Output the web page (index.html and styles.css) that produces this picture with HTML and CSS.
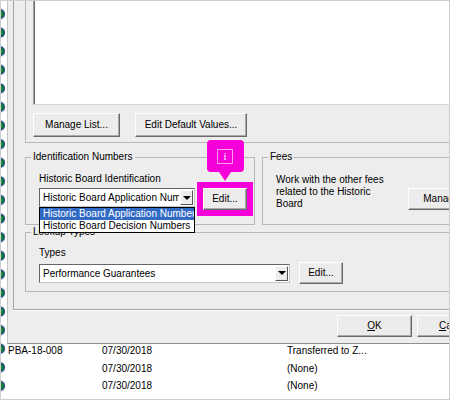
FILE: index.html
```html
<!DOCTYPE html>
<html lang="en">
<head>
<meta charset="utf-8">
<title>Historic Board Settings</title>
<link rel="stylesheet" href="styles.css">
</head>
<body>
<div class="screen">
  <div class="icons"></div>
  <div class="main">
    <div class="dialog">
      <div class="page">
        <div class="group-list">
          <div class="listbox"></div>
          <div class="btn-row">
            <button class="btn btn-manage">Manage List...</button>
            <button class="btn btn-defaults">Edit Default Values...</button>
          </div>
        </div>

        <div class="pair">
          <fieldset class="box box-ident">
            <legend>Identification Numbers</legend>
            <div class="box-body">
              <div class="label label-ident">Historic Board Identification</div>
              <div class="combo-row">
                <div class="combo combo-ident">
                  <span class="combo-text">Historic Board Application Numbers</span>
                  <span class="combo-arrow"></span>
                  <ul class="combo-list">
                    <li class="selected">Historic Board Application Numbers</li>
                    <li>Historic Board Decision Numbers</li>
                  </ul>
                </div>
                <div class="focus-wrap">
                  <button class="btn btn-edit btn-focus">Edit...</button>
                  <div class="callout"><span class="callout-icon">i</span></div>
                </div>
              </div>
            </div>
          </fieldset>

          <fieldset class="box box-fees">
            <legend>Fees</legend>
            <div class="fees-body">
              <p class="fees-text">Work with the other fees related to the Historic Board</p>
              <button class="btn btn-fees">Manage...</button>
            </div>
          </fieldset>
        </div>

        <fieldset class="box box-lookup">
          <legend>Lookup Types</legend>
          <div class="box-body">
            <div class="label label-types">Types</div>
            <div class="combo-row combo-row-lookup">
              <div class="combo combo-lookup">
                <span class="combo-text">Performance Guarantees</span>
                <span class="combo-arrow"></span>
              </div>
              <button class="btn btn-edit">Edit...</button>
            </div>
          </div>
        </fieldset>
      </div>

      <div class="footer">
        <button class="btn btn-dlg"><u>O</u>K</button>
        <button class="btn btn-dlg"><u>C</u>ancel</button>
      </div>
    </div>

    <div class="rows">
      <div class="row"><span>PBA-18-008</span><span>07/30/2018</span><span>Transferred to Z...</span></div>
      <div class="row"><span></span><span>07/30/2018</span><span>(None)</span></div>
      <div class="row"><span></span><span>07/30/2018</span><span>(None)</span></div>
      <div class="row"><span></span><span>07/30/2018</span><span>(None)</span></div>
    </div>
  </div>
</div>
</body>
</html>
```

FILE: styles.css
```css
* { box-sizing: border-box; }

html, body { margin: 0; }

body {
  width: 450px;
  height: 400px;
  overflow: hidden;
  background: #fff;
  color: #000;
  font: 10px/12px "Liberation Sans", Arial, sans-serif;
}

.screen {
  display: flex;
  width: 450px;
  height: 400px;
  overflow: hidden;
  outline: 1px solid #cfcfcf;
  outline-offset: -1px;
}

/* status icons of the record list behind the dialog */
.icons {
  flex: 0 0 7px;
  background-color: #fff;
  background-image: radial-gradient(circle at 0 50%, #2a9a4c 0, #11803b 2.8px, #0d6a33 3.6px, #1f3f8a 4.4px, #8090c0 5px, rgba(255,255,255,0) 5.6px);
  background-size: 7px 18.6px;
  background-position: 0 4.7px;
  background-repeat: repeat-y;
}

.main {
  flex: 1;
  min-width: 0;
  overflow: hidden;
}

.dialog {
  width: 494px;
  background: #ededed;
  border-left: 1px solid #c4c4c4;
  border-right: 1px solid #8f8f8f;
  border-bottom: 1px solid #8f8f8f;
}

.page {
  margin-left: 5px;
  padding: 0 8px 17px 11px;
  border-left: 1px solid #a3a3a3;
  border-bottom: 1px solid #a3a3a3;
  box-shadow: 0 1px 0 #fff;
}

/* list group */
.group-list {
  padding: 0 0 5px 7px;
  border-left: 1px solid #b8b8b8;
  border-bottom: 1px solid #b8b8b8;
}

.listbox {
  height: 105px;
  background: #fff;
  border-left: 1px solid #a0a0a0;
  border-bottom: 1px solid #d6d6d6;
  box-shadow: inset 1px 0 0 #6a6a6a;
}

.btn-row {
  display: flex;
  gap: 15px;
  margin-top: 8px;
}

/* buttons */
.btn {
  font: inherit;
  color: #000;
  height: 24px;
  padding: 0;
  background: #ececec;
  border: 1px solid;
  border-color: #fff #6a6a6a #6a6a6a #fff;
  box-shadow: inset -1px -1px 0 #a9a9a9;
  text-align: center;
  white-space: nowrap;
}

.btn-manage { width: 87px; }
.btn-defaults { width: 112px; }
.btn-edit { width: 44px; height: 22px; }
.btn-fees { width: 75px; height: 22px; flex: none; margin: 25px 0 0 17px; }
.btn-dlg { width: 75px; height: 22px; }

/* group boxes */
.pair {
  display: flex;
  margin-top: 8px;
}

.box {
  margin: 0;
  min-width: 0;
  padding: 0 8px 0 5px;
  border: 1px solid #b8b8b8;
}

.box legend {
  padding: 0 2px;
  line-height: 12px;
}

.box-ident {
  width: 230px;
  padding-bottom: 14px;
}

.box-fees {
  width: 230px;
  margin-left: 7px;
}

.box-lookup {
  margin-top: 1px;
  padding-bottom: 7px;
}

.box-body { padding-left: 8px; }

.label-ident { margin-top: 10px; }
.label-types { margin-top: 9px; }

.combo-row {
  display: flex;
  align-items: flex-start;
  gap: 8px;
  margin-top: 3px;
}

.combo-row-lookup {
  align-items: center;
  gap: 9px;
}

/* combo boxes */
.combo {
  position: relative;
  display: flex;
  height: 19px;
  background: #fff;
  border: 1px solid;
  border-color: #666 #c4c4c4 #c4c4c4 #666;
}

.combo-ident { width: 156px; }
.combo-lookup { width: 251px; }

.combo-text {
  flex: 1;
  min-width: 0;
  overflow: hidden;
  white-space: nowrap;
  padding-left: 3px;
  line-height: 17px;
}

.combo-arrow {
  position: relative;
  flex: 0 0 13px;
  margin: 1px;
  background: #ececec;
  border: 1px solid;
  border-color: #fff #555 #555 #fff;
}

.combo-arrow::after {
  content: "";
  position: absolute;
  left: 50%;
  top: 50%;
  margin: -2px 0 0 -4px;
  border-left: 4px solid transparent;
  border-right: 4px solid transparent;
  border-top: 4px solid #000;
}

.combo-list {
  position: absolute;
  top: calc(100% + 1px);
  left: -1px;
  right: -1px;
  z-index: 2;
  margin: 0;
  padding: 0;
  list-style: none;
  background: #fff;
  border: 1px solid #000;
}

.combo-list li {
  line-height: 12px;
  padding-left: 3px;
  white-space: nowrap;
  overflow: hidden;
}

.combo-list .selected {
  background: #316ac5;
  color: #fff;
}

/* highlighted Edit button with its marker */
.focus-wrap {
  position: relative;
  z-index: 3;
}

.btn-focus { outline: 6px solid #f500d8; }

.callout {
  position: absolute;
  left: 50%;
  bottom: calc(100% + 16px);
  width: 37px;
  height: 32px;
  margin-left: -18.5px;
  display: flex;
  align-items: center;
  justify-content: center;
  background: #f500d8;
  border-radius: 4px;
}

.callout::after {
  content: "";
  position: absolute;
  left: 50%;
  top: 100%;
  margin-left: -6px;
  border-left: 6px solid transparent;
  border-right: 6px solid transparent;
  border-top: 9px solid #f500d8;
}

.callout-icon {
  width: 16px;
  height: 15px;
  border: 1px solid #ff9cf0;
  color: #fff;
  font: 11px/13px "Liberation Serif", serif;
  text-align: center;
}

/* fees */
.fees-body {
  display: flex;
  padding-left: 8px;
}

.fees-text {
  width: 116px;
  margin: 11px 0 0;
  line-height: 12px;
}

/* dialog buttons */
.footer {
  display: flex;
  justify-content: flex-end;
  gap: 5px;
  height: 33px;
  padding: 5px 8px 0 0;
}

/* record rows below the dialog */
.rows { padding-left: 1px; }

.row {
  display: grid;
  grid-template-columns: 94px 185px 1fr;
  height: 17.5px;
  line-height: 14px;
  white-space: nowrap;
}
```
